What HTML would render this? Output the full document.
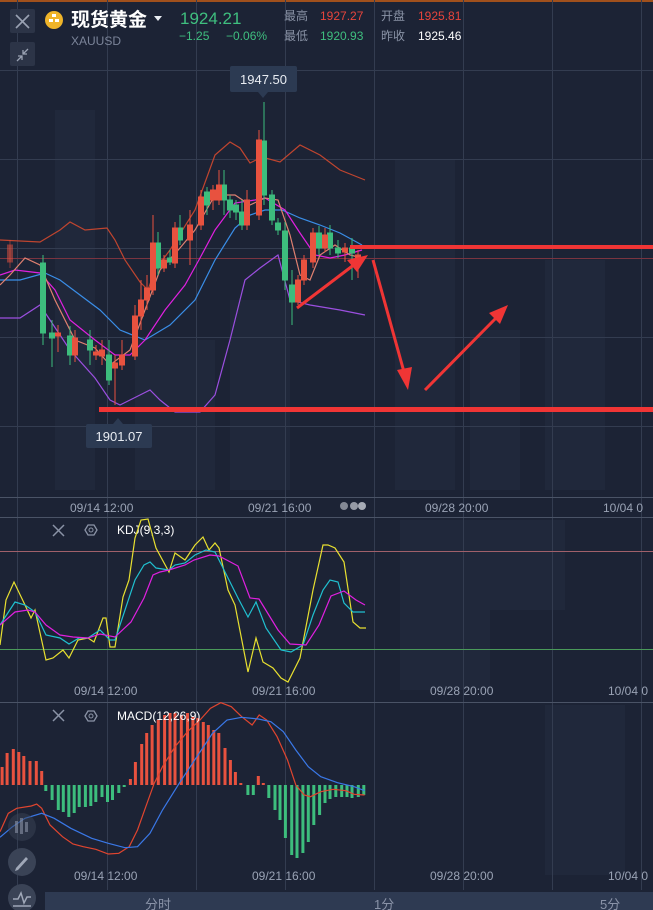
<!DOCTYPE html>
<html><head><meta charset="utf-8"><style>
html,body{margin:0;padding:0;background:#1c2335;width:653px;height:910px;overflow:hidden;font-family:"Liberation Sans","Noto Sans CJK SC",sans-serif}
svg{display:block}
</style></head><body>
<svg width="653" height="910" viewBox="0 0 653 910" xmlns="http://www.w3.org/2000/svg" font-family="Liberation Sans, Noto Sans CJK SC, sans-serif">
<rect width="653" height="910" fill="#1c2335"/>
<rect x="0" y="0" width="653" height="2" fill="#a0501c"/>
<!-- faint building blocks -->
<g fill="#20283b">
<rect x="55" y="110" width="40" height="380"/><rect x="135" y="340" width="80" height="150"/><rect x="230" y="300" width="60" height="190"/>
<rect x="395" y="160" width="60" height="330"/><rect x="470" y="330" width="50" height="160"/><rect x="545" y="260" width="60" height="230"/>
<rect x="400" y="520" width="90" height="170"/><rect x="465" y="520" width="100" height="90"/><rect x="545" y="705" width="80" height="170"/>
</g>
<!-- grid -->
<g stroke="#333c50" stroke-width="1">
<line x1="0" y1="70.5" x2="653" y2="70.5"/><line x1="0" y1="159.5" x2="653" y2="159.5"/><line x1="0" y1="248.5" x2="653" y2="248.5"/><line x1="0" y1="337.5" x2="653" y2="337.5"/><line x1="0" y1="426.5" x2="653" y2="426.5"/>
<line x1="17.5" y1="0" x2="17.5" y2="890"/><line x1="107.5" y1="0" x2="107.5" y2="890"/><line x1="196.5" y1="0" x2="196.5" y2="890"/><line x1="285.5" y1="0" x2="285.5" y2="890"/><line x1="374.5" y1="0" x2="374.5" y2="890"/><line x1="463.5" y1="0" x2="463.5" y2="890"/><line x1="552.5" y1="0" x2="552.5" y2="890"/><line x1="641.5" y1="0" x2="641.5" y2="890"/>
</g>
<g stroke="#4a5366"><line x1="0" y1="497.5" x2="653" y2="497.5"/><line x1="0" y1="517.5" x2="653" y2="517.5"/><line x1="0" y1="702.5" x2="653" y2="702.5"/></g>
<line x1="0" y1="258.5" x2="653" y2="258.5" stroke="#7a3440"/>
<!-- bands -->
<g fill="none" stroke-width="1.2">
<polyline stroke="#c0452f" points="0,240 40,242 60,230 70,222 85,230 107,228 115,240 125,260 140,282 148,290 155,270 170,250 195,210 215,155 230,142 240,148 250,163 262,157 280,162 300,145 320,155 340,170 365,180"/>
<polyline stroke="#9b4fe0" points="0,318 20,318 40,305 50,320 70,350 95,378 110,400 120,405 140,395 150,390 160,400 175,412 200,412 215,395 230,340 245,280 260,268 278,255 290,300 310,305 340,310 365,315"/>
<polyline stroke="#3a8ee8" points="0,280 20,280 45,273 60,280 80,295 100,310 120,330 145,340 170,325 195,300 215,260 235,228 250,215 265,210 282,210 300,218 320,225 340,233 362,245"/>
<polyline stroke="#e020e0" points="0,275 15,270 40,273 55,290 70,320 95,340 115,355 130,355 145,340 165,310 185,285 200,258 215,230 235,203 255,200 265,198 285,210 300,233 315,255 330,258 345,255 362,250"/>
<polyline stroke="#e08070" points="0,285 10,275 25,258 40,265 55,300 75,340 95,348 110,365 130,350 145,310 160,270 180,248 195,230 215,195 235,195 250,205 265,198 278,200 290,235 300,275 310,280 320,255 335,245 350,255 362,258"/>
</g>
<!-- candles -->
<g stroke-width="1">
<g stroke="#3dbd7d" fill="#3dbd7d">
<line x1="43" y1="255" x2="43" y2="345"/><rect x="40.5" y="263" width="5" height="70"/>
<line x1="52" y1="320" x2="52" y2="367"/><rect x="49.5" y="333" width="5" height="5"/>
<line x1="70" y1="326" x2="70" y2="365"/><rect x="67.5" y="336" width="5" height="19"/>
<line x1="90" y1="330" x2="90" y2="365"/><rect x="87.5" y="340" width="5" height="10"/>
<line x1="109" y1="340" x2="109" y2="385"/><rect x="106.5" y="355" width="5" height="25"/>
<line x1="158" y1="232" x2="158" y2="275"/><rect x="155.5" y="243" width="5" height="25"/>
<line x1="170" y1="250" x2="170" y2="265"/><rect x="167.5" y="258" width="5" height="4"/>
<line x1="180" y1="215" x2="180" y2="245"/><rect x="177.5" y="228" width="5" height="12"/>
<line x1="207" y1="187" x2="207" y2="215"/><rect x="204.5" y="192" width="5" height="13"/>
<line x1="224" y1="170" x2="224" y2="215"/><rect x="221.5" y="185" width="5" height="15"/>
<line x1="230" y1="195" x2="230" y2="218"/><rect x="227.5" y="200" width="5" height="10"/>
<line x1="236" y1="200" x2="236" y2="220"/><rect x="233.5" y="205" width="5" height="7"/>
<line x1="242" y1="200" x2="242" y2="230"/><rect x="239.5" y="212" width="5" height="13"/>
<line x1="264" y1="102" x2="264" y2="205"/><rect x="261.5" y="141" width="5" height="54"/>
<line x1="272" y1="190" x2="272" y2="225"/><rect x="269.5" y="195" width="5" height="25"/>
<line x1="278" y1="218" x2="278" y2="235"/><rect x="275.5" y="223" width="5" height="7"/>
<line x1="285" y1="222" x2="285" y2="290"/><rect x="282.5" y="231" width="5" height="49"/>
<line x1="292" y1="270" x2="292" y2="325"/><rect x="289.5" y="285" width="5" height="17"/>
<line x1="319" y1="226" x2="319" y2="255"/><rect x="316.5" y="233" width="5" height="15"/>
<line x1="330" y1="225" x2="330" y2="255"/><rect x="327.5" y="233" width="5" height="15"/>
<line x1="338" y1="240" x2="338" y2="258"/><rect x="335.5" y="248" width="5" height="5"/>
<line x1="352" y1="238" x2="352" y2="280"/><rect x="349.5" y="248" width="5" height="5"/>
</g>
<g stroke="#e8523f" fill="#e8523f">
<line x1="10" y1="240" x2="10" y2="268" opacity=".5"/><rect x="7.5" y="245" width="5" height="17" opacity=".5"/>
<line x1="58" y1="325" x2="58" y2="352"/><rect x="55.5" y="333" width="5" height="3"/>
<line x1="75" y1="330" x2="75" y2="362"/><rect x="72.5" y="338" width="5" height="17"/>
<line x1="96" y1="345" x2="96" y2="360"/><rect x="93.5" y="352" width="5" height="3"/>
<line x1="102" y1="340" x2="102" y2="365"/><rect x="99.5" y="350" width="5" height="6"/>
<line x1="115" y1="355" x2="115" y2="405"/><rect x="112.5" y="363" width="5" height="5"/>
<line x1="122" y1="340" x2="122" y2="370"/><rect x="119.5" y="355" width="5" height="10"/>
<line x1="135" y1="305" x2="135" y2="360"/><rect x="132.5" y="316" width="5" height="40"/>
<line x1="141" y1="280" x2="141" y2="330"/><rect x="138.5" y="300" width="5" height="16"/>
<line x1="147" y1="275" x2="147" y2="310"/><rect x="144.5" y="288" width="5" height="12"/>
<line x1="153" y1="215" x2="153" y2="295"/><rect x="150.5" y="243" width="5" height="47"/>
<line x1="164" y1="255" x2="164" y2="272"/><rect x="161.5" y="260" width="5" height="8"/>
<line x1="175" y1="222" x2="175" y2="268"/><rect x="172.5" y="228" width="5" height="35"/>
<line x1="190" y1="210" x2="190" y2="265"/><rect x="187.5" y="225" width="5" height="15"/>
<line x1="201" y1="190" x2="201" y2="230"/><rect x="198.5" y="197" width="5" height="28"/>
<line x1="213" y1="185" x2="213" y2="210"/><rect x="210.5" y="190" width="5" height="10"/>
<line x1="219" y1="170" x2="219" y2="205"/><rect x="216.5" y="185" width="5" height="15"/>
<line x1="247" y1="190" x2="247" y2="230"/><rect x="244.5" y="200" width="5" height="25"/>
<line x1="259" y1="130" x2="259" y2="220"/><rect x="256.5" y="140" width="5" height="75"/>
<line x1="298" y1="275" x2="298" y2="305"/><rect x="295.5" y="280" width="5" height="22"/>
<line x1="304" y1="255" x2="304" y2="285"/><rect x="301.5" y="260" width="5" height="20"/>
<line x1="313" y1="228" x2="313" y2="268"/><rect x="310.5" y="233" width="5" height="29"/>
<line x1="325" y1="228" x2="325" y2="252"/><rect x="322.5" y="235" width="5" height="13"/>
<line x1="345" y1="243" x2="345" y2="262"/><rect x="342.5" y="248" width="5" height="4"/>
<line x1="358" y1="250" x2="358" y2="278"/><rect x="355.5" y="255" width="5" height="7"/>
</g>
</g>
<!-- red annotations -->
<g fill="#f03535" stroke="#f03535">
<rect x="350" y="245" width="303" height="4" stroke="none"/>
<rect x="99" y="407" width="554" height="5" stroke="none"/>
<line x1="297" y1="308" x2="355" y2="264" stroke-width="3"/>
<polygon points="368,255 347,260 357,272" stroke="none"/>
<line x1="373" y1="260" x2="404" y2="372" stroke-width="3"/>
<polygon points="408,390 397,370 412,367" stroke="none"/>
<line x1="425" y1="390" x2="496" y2="318" stroke-width="3"/>
<polygon points="508,305 489,313 500,324" stroke="none"/>
</g>
<!-- price labels -->
<rect x="230" y="66" width="67" height="26" rx="2" fill="#2c3a52"/><polygon points="258,92 268,92 263,98" fill="#2c3a52"/>
<text x="263.5" y="84" fill="#e8ecf2" font-size="13" text-anchor="middle">1947.50</text>
<rect x="86" y="424" width="66" height="24" rx="2" fill="#2c3a52"/><polygon points="113,424 123,424 118,418" fill="#2c3a52"/>
<text x="119" y="441" fill="#e8ecf2" font-size="13" text-anchor="middle">1901.07</text>
<!-- header -->
<rect x="10" y="9" width="25" height="24" rx="2" fill="#2c3447"/>
<path d="M16 15 L29 28 M29 15 L16 28" stroke="#9aa2b3" stroke-width="1.6"/>
<rect x="10" y="42" width="25" height="24" rx="2" fill="#2c3447"/>
<path d="M28 49 L23 54 M23 50 L23 54 L27 54 M17 61 L22 56 M18 56 L22 56 L22 60" stroke="#9aa2b3" stroke-width="1.3" fill="none"/>
<circle cx="54" cy="20" r="9" fill="#efb42a"/>
<g fill="#fff"><rect x="52" y="14" width="4" height="3"/><rect x="49" y="19" width="4" height="3"/><rect x="55" y="19" width="4" height="3"/></g>
<text x="71" y="26" fill="#ffffff" font-size="19" font-weight="bold">现货黄金</text>
<polygon points="154,16 162,16 158,21" fill="#e8ecf2"/>
<text x="71" y="45" fill="#7b8499" font-size="12">XAUUSD</text>
<text x="180" y="24" fill="#3fbf7f" font-size="17">1924.21</text>
<text x="179" y="40" fill="#3fbf7f" font-size="12">−1.25</text>
<text x="226" y="40" fill="#3fbf7f" font-size="12">−0.06%</text>
<text x="284" y="20" fill="#8a93a6" font-size="12">最高</text>
<text x="320" y="20" fill="#e8453c" font-size="12">1927.27</text>
<text x="381" y="20" fill="#8a93a6" font-size="12">开盘</text>
<text x="418" y="20" fill="#e8453c" font-size="12">1925.81</text>
<text x="284" y="40" fill="#8a93a6" font-size="12">最低</text>
<text x="320" y="40" fill="#3fbf7f" font-size="12">1920.93</text>
<text x="381" y="40" fill="#8a93a6" font-size="12">昨收</text>
<text x="418" y="40" fill="#ffffff" font-size="12">1925.46</text>
<!-- time axis -->
<g fill="#9aa3b5" font-size="12">
<text x="70" y="512">09/14 12:00</text><text x="248" y="512">09/21 16:00</text><text x="425" y="512">09/28 20:00</text><text x="603" y="512">10/04 0</text>
<text x="74" y="695">09/14 12:00</text><text x="252" y="695">09/21 16:00</text><text x="430" y="695">09/28 20:00</text><text x="608" y="695">10/04 0</text>
<text x="74" y="880">09/14 12:00</text><text x="252" y="880">09/21 16:00</text><text x="430" y="880">09/28 20:00</text><text x="608" y="880">10/04 0</text>
</g>
<g fill="#c9cdd6"><circle cx="344" cy="506" r="4" opacity=".6"/><circle cx="354" cy="506" r="4" opacity=".7"/><circle cx="362" cy="506" r="4" opacity=".8"/></g>
<!-- KDJ -->
<line x1="0" y1="551.5" x2="653" y2="551.5" stroke="#a0606a"/>
<line x1="0" y1="649.5" x2="653" y2="649.5" stroke="#4a9a5a"/>
<path d="M53 525 L64 536 M64 525 L53 536" stroke="#8a93a6" stroke-width="1.5"/>
<polygon points="85,530 88,525 94,525 97,530 94,535 88,535" fill="none" stroke="#8a93a6" stroke-width="1.3"/><circle cx="91" cy="530" r="2" fill="none" stroke="#8a93a6"/>
<text x="117" y="534" fill="#fff" font-size="12">KDJ(9,3,3)</text>
<g fill="none" stroke-width="1.2">
<polyline stroke="#e8e030" points="0,645 6,600 14,582 25,605 31,618 35,610 46,660 53,658 63,650 69,658 78,640 88,638 94,642 103,618 106,618 110,647 115,647 123,597 129,580 135,538 141,520 148,519 156,548 169,572 175,553 185,560 195,545 203,537 209,550 215,543 219,548 228,590 235,605 248,672 256,638 263,662 273,668 281,678 288,682 300,658 313,590 323,545 328,545 335,548 344,562 353,622 360,628 366,628"/>
<polyline stroke="#20c0d0" points="0,625 15,602 25,605 35,612 46,635 60,638 69,644 79,638 88,638 100,630 110,640 115,640 125,610 135,580 144,565 150,562 156,568 169,570 175,565 185,563 195,555 206,550 215,552 225,572 238,598 248,617 256,602 266,628 281,650 291,652 303,645 313,615 323,590 330,580 338,582 344,603 353,612 365,612"/>
<polyline stroke="#e020e0" points="0,625 15,612 28,610 35,612 46,625 60,635 73,637 88,638 100,634 115,637 131,622 144,598 153,575 160,572 169,570 185,565 194,560 210,555 219,556 238,566 250,598 259,599 278,630 290,644 306,645 319,625 331,596 344,591 356,600 365,605"/>
</g>
<!-- MACD bars -->
<g fill="#e8523f">
<rect x="0.6" y="767" width="3" height="18"/><rect x="5.6" y="753" width="3" height="32"/><rect x="11.8" y="749" width="3" height="36"/><rect x="17.3" y="752" width="3" height="33"/><rect x="22.3" y="756" width="3" height="29"/><rect x="28.5" y="761" width="3" height="24"/><rect x="34.8" y="761" width="3" height="24"/><rect x="40.2" y="771" width="3" height="14"/>
<rect x="128.9" y="779" width="3" height="6"/><rect x="133.9" y="762" width="3" height="23"/><rect x="140.2" y="744" width="3" height="41"/><rect x="145.2" y="733" width="3" height="52"/><rect x="150.6" y="725" width="3" height="60"/><rect x="156.8" y="720" width="3" height="65"/><rect x="163.1" y="715" width="3" height="70"/><rect x="168.5" y="713" width="3" height="72"/><rect x="173.5" y="713" width="3" height="72"/><rect x="179.8" y="715" width="3" height="70"/><rect x="186" y="713" width="3" height="72"/><rect x="191.4" y="717" width="3" height="68"/><rect x="196.4" y="718" width="3" height="67"/><rect x="201.8" y="722" width="3" height="63"/><rect x="206.8" y="725" width="3" height="60"/><rect x="212.3" y="730" width="3" height="55"/><rect x="217.3" y="733" width="3" height="52"/><rect x="223.5" y="748" width="3" height="37"/><rect x="228.9" y="760" width="3" height="25"/><rect x="233.9" y="772" width="3" height="13"/><rect x="239.3" y="783" width="3" height="2"/>
<rect x="256.8" y="776" width="3" height="9"/><rect x="261.8" y="783" width="3" height="2"/>
</g>
<g fill="#3dbd7d">
<rect x="44.3" y="785" width="3" height="6"/><rect x="50.6" y="785" width="3" height="15"/><rect x="56.8" y="785" width="3" height="25"/><rect x="61.8" y="785" width="3" height="27"/><rect x="67.3" y="785" width="3" height="32"/><rect x="72.7" y="785" width="3" height="28"/><rect x="77.7" y="785" width="3" height="22"/><rect x="83.9" y="785" width="3" height="22"/><rect x="89.3" y="785" width="3" height="21"/><rect x="94.3" y="785" width="3" height="17"/><rect x="100.5" y="785" width="3" height="12"/><rect x="106" y="785" width="3" height="17"/><rect x="111" y="785" width="3" height="15"/><rect x="117.3" y="785" width="3" height="8"/><rect x="122.7" y="785" width="3" height="2"/>
<rect x="246.4" y="785" width="3" height="10"/><rect x="251.8" y="785" width="3" height="10"/>
<rect x="267.3" y="785" width="3" height="13"/><rect x="273.5" y="785" width="3" height="25"/><rect x="278.5" y="785" width="3" height="35"/><rect x="283.9" y="785" width="3" height="53"/><rect x="290.2" y="785" width="3" height="70"/><rect x="295.5" y="785" width="3" height="73"/><rect x="301.4" y="785" width="3" height="68"/><rect x="306.8" y="785" width="3" height="57"/><rect x="312.3" y="785" width="3" height="40"/><rect x="318.1" y="785" width="3" height="30"/><rect x="323.5" y="785" width="3" height="18"/><rect x="328.5" y="785" width="3" height="14"/><rect x="334.3" y="785" width="3" height="12"/><rect x="340.2" y="785" width="3" height="12"/><rect x="345.5" y="785" width="3" height="12"/><rect x="350.5" y="785" width="3" height="13"/><rect x="356.8" y="785" width="3" height="12"/><rect x="362.3" y="785" width="3" height="10"/>
</g>
<g fill="none" stroke-width="1.2">
<polyline stroke="#e0452f" points="0,831.7 8.3,813.3 16.7,808.3 31.3,806 36.7,804 41.7,808.3 50,825 62.5,836.7 72.9,844 83.3,846.7 95.8,849.3 108.3,854 118.8,853.3 129.2,846.7 137.5,830 145.8,806.7 154.2,783.3 162.5,766.7 175,746.7 187.5,731.7 200,720 210.4,708.3 220.8,702.7 231.3,706.7 241.7,716.7 252.1,725 259.2,715 266.7,720 277.1,736.7 287.5,760 295.8,785 304.2,795 310.4,796.7 320.8,791.7 333.3,789.3 345.8,790.7 354.2,794.3 364.6,795"/>
<polyline stroke="#3a78e8" points="0,837.3 12.5,826.7 25,818.3 41.7,813.3 54.2,818.3 70.8,828.3 91.7,838.3 108.3,843.3 125,847.7 137.5,846.7 150,833.3 162.5,810 179.2,783.3 195.8,758.3 212.5,733.3 227,720 241.7,717.3 258.3,719 270.8,721.7 283.3,731.7 295.8,750 308.3,766.7 320.8,776.7 337.5,782.7 354.2,786.7 364.6,790.7"/>
</g>
<path d="M53 710 L64 721 M64 710 L53 721" stroke="#8a93a6" stroke-width="1.5"/>
<polygon points="85,716 88,711 94,711 97,716 94,721 88,721" fill="none" stroke="#8a93a6" stroke-width="1.3"/><circle cx="91" cy="716" r="2" fill="none" stroke="#8a93a6"/>
<text x="117" y="720" fill="#fff" font-size="12">MACD(12,26,9)</text>
<!-- left round tools -->
<circle cx="22" cy="827" r="14" fill="#3a4356" opacity=".5"/>
<g fill="#8a93a6" opacity=".6"><rect x="15" y="821" width="3" height="12"/><rect x="20" y="818" width="3" height="16"/><rect x="25" y="822" width="3" height="10"/></g>
<circle cx="22" cy="862" r="14" fill="#3a4356"/>
<path d="M16 868 L26 857 L28 859 L18 870 L15 871 Z" fill="#a0a8b8"/>
<circle cx="22" cy="898" r="14" fill="#3a4356"/>
<path d="M13 899 L18 899 L21 893 L24 903 L27 897 L31 897" stroke="#a0a8b8" stroke-width="1.5" fill="none"/><line x1="13" y1="906" x2="31" y2="906" stroke="#a0a8b8" stroke-width="1.5"/>
<!-- bottom tabs -->
<rect x="45" y="892" width="608" height="18" fill="#2e3a52"/>
<g fill="#8a93a8" font-size="13"><text x="145" y="909">分时</text><text x="374" y="909">1分</text><text x="600" y="909">5分</text></g>
</svg>
</body></html>
